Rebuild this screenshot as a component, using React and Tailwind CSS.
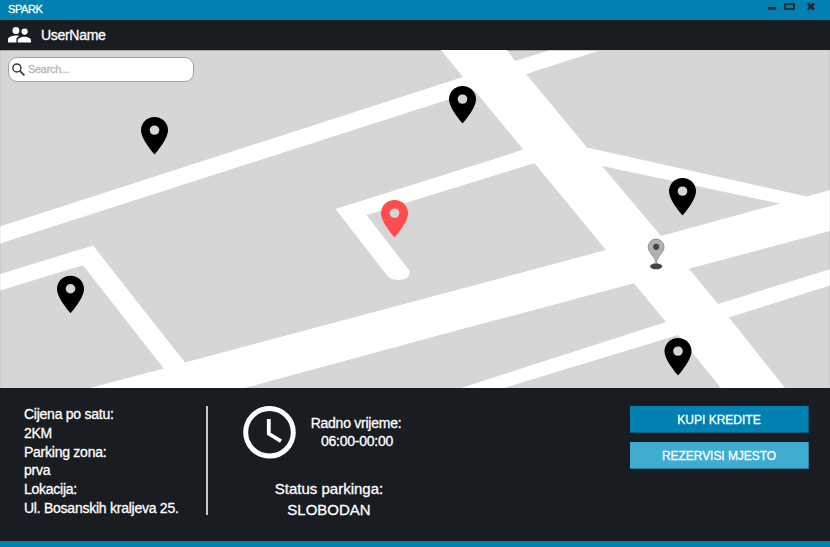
const pins = [
  { x: 154.5, y: 117, color: '#000000' },
  { x: 462.5, y: 86, color: '#000000' },
  { x: 394.5, y: 200, color: '#ff4d4d' },
  { x: 682.5, y: 178, color: '#000000' },
  { x: 70.5, y: 275.7, color: '#000000' },
  { x: 678, y: 338, color: '#000000' },
];

function Pin({ x, y, color }) {
  return (
    <g transform={`translate(${x} ${y}) scale(1.93 1.87) translate(-12 -2)`}>
      <path
        d="M12 2C8.13 2 5 5.13 5 9c0 5.25 7 13 7 13s7-7.75 7-13c0-3.87-3.13-7-7-7z"
        fill={color}
      />
      <circle cx="12" cy="9" r="2.5" fill="#d6d6d6" />
    </g>
  );
}

function CityMap() {
  return (
    <svg className="block h-full w-full" viewBox="0 50 830 338">
      <rect x="0" y="50" width="830" height="338" fill="#ffffff" />
      <g fill="#d6d6d6">
        <polygon points="0,50 441,50 463,77 0,226.5" />
        <polygon points="0,243.5 475,91 606,250 185,362.5 93,245.5 0,274" />
        <polygon points="0,290.5 83,265.3 163.7,368.5 90,388 0,388" />
        <polygon points="245,388 440,335 634,283.3 666,322 461,388" />
        <polygon points="504,388 678,335 721,388" />
        <polygon points="507.5,50 515,61 550,50" />
        <polygon points="526,74 601,50 830,50 830,190 807,196.5 587,147.5" />
        <polygon points="602,166 780,203.5 661,236" />
        <polygon points="689,268.7 830,231 830,269.3 718,304" />
        <polygon points="729,317.5 830,285.5 830,388 785,388" />
      </g>
      <path
        d="M522.5 150L335.5 209L387 275.5Q391 280 399 280Q412 278.5 409 270L366.5 215L533.5 163.5L545 162L526 148Z"
        fill="#ffffff"
      />
      <path d="M0 50.5H441M507 50.5H548" stroke="#a6a6a6" />
      <path d="M548 50.5H830" stroke="#d0d0d0" />
      <path d="M829.5 50V388M0.5 50V388" stroke="#000000" strokeOpacity="0.05" />
      {pins.map((p) => (
        <Pin key={`${p.x}-${p.y}`} {...p} />
      ))}
      <ellipse cx="656.1" cy="266.3" rx="6" ry="3" fill="#454545" />
      <path
        d="M656.1 263.5C655.5 256 648.2 253.5 648.2 247a7.9 7.9 0 0 1 15.8 0C664 253.5 656.7 256 656.1 263.5Z"
        fill="#b0b0b0"
        stroke="#8c8c8c"
        strokeWidth="0.9"
      />
      <circle cx="656.1" cy="246.8" r="3.1" fill="#454545" />
    </svg>
  );
}

export default function App() {
  return (
    <div className="flex h-[547px] w-[830px] flex-col overflow-hidden bg-[#191c21] font-['Liberation_Sans',Arial,sans-serif] text-white [-webkit-text-stroke:0.3px]">
      <header className="flex h-5 shrink-0 items-start justify-between bg-[#0081b1] pl-2 pr-[14px]">
        <span className="text-[11px] leading-[18px] tracking-[-0.4px]">SPARK</span>
        <svg className="h-5 w-[50px]" viewBox="766 0 50 20">
          <rect x="768" y="7" width="8.3" height="2.6" fill="#23272b" />
          <rect x="785" y="4" width="9" height="5" fill="none" stroke="#23272b" strokeWidth="1.7" />
          <path d="M808 3.5l6 6M814 3.5l-6 6" stroke="#23272b" strokeWidth="2.6" />
        </svg>
      </header>

      <div className="flex h-[30px] shrink-0 items-center gap-[10px] pl-2">
        <svg className="h-[30px] w-[23px]" viewBox="8 20 23 30" fill="#ffffff">
          <circle cx="15.9" cy="30.4" r="3.5" />
          <circle cx="24.6" cy="31.6" r="3.1" />
          <path d="M8 42.5v-3c0-2.8 4.8-3.9 8.4-3.9 1 0 1.9.1 2.8.3-1.5.9-2.8 2.1-2.8 3.9v2.7z" />
          <path d="M17.8 42.5v-2.2c0-2.4 4-3.6 6.6-3.6s6.6 1.2 6.6 3.6v2.2z" />
        </svg>
        <span className="text-[14px] tracking-[-0.3px]">UserName</span>
      </div>

      <main className="relative h-[338px] shrink-0">
        <CityMap />
        <label className="absolute left-2 top-[7px] flex h-[25px] w-[186px] items-center gap-[3px] rounded-[9px] border border-[#a3a3a3] bg-white pl-[3px]">
          <svg className="size-[13px]" viewBox="0 0 13 13" fill="none" stroke="#3d3d3d">
            <circle cx="4.9" cy="4.9" r="4" strokeWidth="1.5" />
            <path d="M7.8 7.8l4.6 4.6" strokeWidth="1.8" />
          </svg>
          <span className="pb-px text-[11px] leading-[22px] tracking-[-0.3px] text-[#b5b5b5]">Search...</span>
        </label>
      </main>

      <section className="flex flex-1 pl-6 pr-[21px] pt-[18px]">
        <div className="h-[109px] w-[184px] shrink-0 border-r-2 border-[#c8c8c8]">
          <dl className="-mt-px whitespace-nowrap text-[14px] leading-[18.8px] tracking-[-0.25px]">
            <dt>Cijena po satu:</dt>
            <dd>2KM</dd>
            <dt>Parking zona:</dt>
            <dd>prva</dd>
            <dt>Lokacija:</dt>
            <dd>Ul. Bosanskih kraljeva 25.</dd>
          </dl>
        </div>

        <div className="ml-[35px] flex w-[172px] flex-col">
          <div className="flex">
            <svg className="h-[53px] w-[53px] shrink-0" viewBox="0 0 53 53" fill="none" stroke="#ffffff">
              <circle cx="26.5" cy="26.3" r="23.8" strokeWidth="5" />
              <path d="M25.8 13V27.8L38 35.2" strokeWidth="3.8" />
            </svg>
            <p className="ml-2 mt-2 w-[104px] shrink-0 whitespace-nowrap text-center text-[14px] leading-[18px] tracking-[-0.25px]">
              Radno vrijeme:
              <br />
              <span className="pl-[2px]">06:00-00:00</span>
            </p>
          </div>
          <p className="mt-[19px] whitespace-nowrap text-center text-[15px] leading-[21px]">
            Status parkinga:
            <br />
            SLOBODAN
          </p>
        </div>

        <div className="ml-auto flex w-[179px] flex-col gap-[9px]">
          <button className="h-[27px] border-b border-r border-[#075c7b] bg-[#0081b1] pt-px text-[12px]">
            KUPI KREDITE
          </button>
          <button className="h-[27px] border-b border-r border-[#2e7e9b] bg-[#3facd1] pt-px text-[12px] tracking-[-0.05px]">
            REZERVISI MJESTO
          </button>
        </div>
      </section>

      <footer className="h-[6px] shrink-0 bg-[#0081b1]" />
    </div>
  );
}
